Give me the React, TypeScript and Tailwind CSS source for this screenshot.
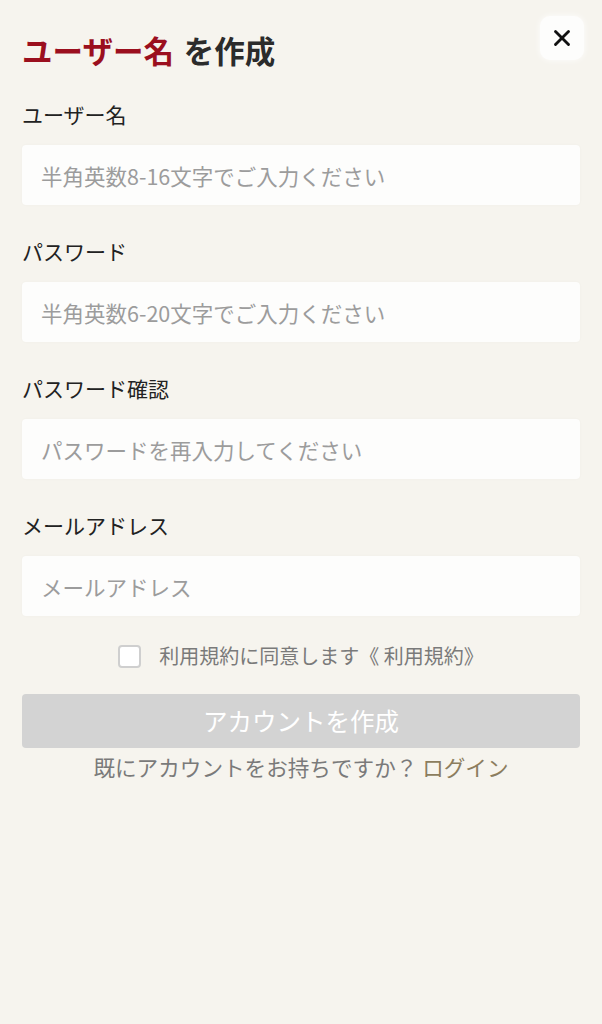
import { X } from "lucide-react";

const fields = [
  { label: "ユーザー名", placeholder: "半角英数8-16文字でご入力ください", type: "text" },
  { label: "パスワード", placeholder: "半角英数6-20文字でご入力ください", type: "password" },
  { label: "パスワード確認", placeholder: "パスワードを再入力してください", type: "password" },
  { label: "メールアドレス", placeholder: "メールアドレス", type: "email" },
];

const Field = ({ label, placeholder, type }: { label: string; placeholder: string; type: string }) => (
  <div className="flex flex-col">
    <label className="text-[21px] leading-[30px] text-[#222]">{label}</label>
    <input
      type={type}
      placeholder={placeholder}
      className="mt-4 h-[60px] w-full rounded-[4px] bg-[#fdfdfc] pl-[19px] text-[21.5px] text-[#222] shadow-[0_0_3px_rgba(0,0,0,0.03)] outline-none placeholder:text-[#9c9c9c]"
    />
  </div>
);

export default function App() {
  return (
    <div
      className="min-h-[1024px] w-full bg-[#f6f4ee] px-[22px]"
      style={{ fontFamily: '"Noto Sans CJK JP", "Noto Sans", sans-serif' }}
    >
      <div className="flex items-start justify-between pt-4">
        <h1 className="mt-[12px] text-[30.5px] font-bold leading-[45px] text-[#2b2b2b]">
          <span className="mr-[3px] text-[#9b0f1e]">ユーザー名</span> を作成
        </h1>
        <button className="-mr-1 flex h-11 w-11 items-center justify-center rounded-[10px] bg-[#fdfdfc] shadow-[0_0_6px_rgba(255,255,255,0.9)]">
          <X size={26} strokeWidth={2.6} className="text-[#111]" />
        </button>
      </div>

      <div className="mt-[26px] flex flex-col gap-[31px]">
        {fields.map((f) => (
          <Field key={f.label} {...f} />
        ))}
      </div>

      <label className="mt-[25px] flex items-center justify-center gap-[18px]">
        <span className="h-[23px] w-[23px] rounded-[4px] border-2 border-[#cfcfcf] bg-white" />
        <span className="text-[20px] leading-[30px] text-[#7a7a7a]">利用規約に同意します《 利用規約》</span>
      </label>

      <button
        disabled
        className="mt-[23px] h-[54px] w-full rounded-[4px] bg-[#d3d3d3] text-[24.5px] text-white"
      >
        アカウントを作成
      </button>

      <p className="mt-1 text-center text-[21.6px] leading-[30px] text-[#7a7a7a]">
        既にアカウントをお持ちですか？ <span className="text-[#8c7d5e]">ログイン</span>
      </p>
    </div>
  );
}
